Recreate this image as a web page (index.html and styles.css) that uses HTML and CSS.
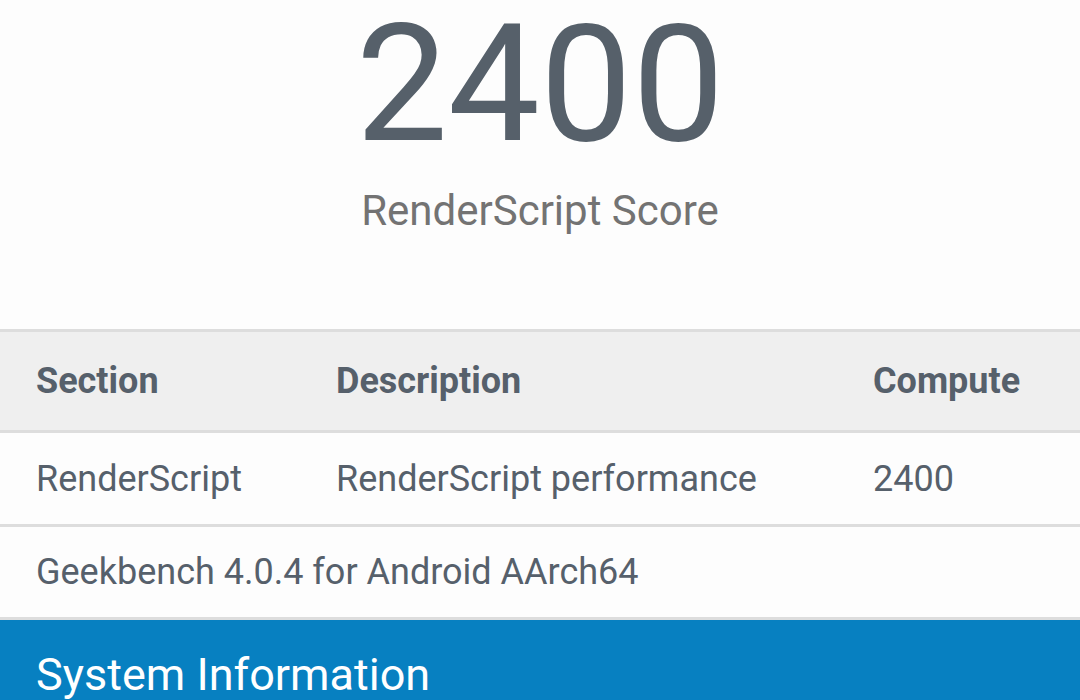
FILE: index.html
```html
<!DOCTYPE html>
<html lang="en">
<head>
  <meta charset="UTF-8" />
  <meta name="viewport" content="width=device-width, initial-scale=1.0" />
  <title>RenderScript Score</title>
  <link rel="stylesheet" href="styles.css">
</head>
<body>
  <section class="score">
    <div class="score-value">2400</div>
    <div class="score-label">RenderScript Score</div>
  </section>

  <div class="results">
    <div class="row head">
      <div>Section</div>
      <div>Description</div>
      <div>Compute</div>
    </div>
    <div class="row">
      <div>RenderScript</div>
      <div>RenderScript performance</div>
      <div>2400</div>
    </div>
    <div class="row note">
      <div>Geekbench 4.0.4 for Android AArch64</div>
    </div>
  </div>

  <div class="section-title">System Information</div>
</body>
</html>
```

FILE: styles.css
```css
:root {
  --text-color: #56606b;
  --line-color: #dddddd;
  --head-bg: #efefef;
  --blue: #0780c1;
}

body {
  margin: 0;
  font-family: Roboto, "Liberation Sans", sans-serif;
  background-color: #fdfdfd;
  color: var(--text-color);
}

.score {
  text-align: center;
  padding-top: 9px;
  padding-bottom: 93px;
}

.score-value {
  font-size: 164px;
  line-height: 150px;
  color: #56606a;
}

.score-label {
  margin-top: 27px;
  font-size: 42px;
  line-height: 50px;
  color: #737373;
}

.results {
  border-top: 3px solid var(--line-color);
}

.row {
  display: grid;
  grid-template-columns: 300px 537px 1fr;
  align-items: center;
  padding-left: 36px;
  height: 91px;
  font-size: 36px;
  border-bottom: 3px solid var(--line-color);
}

.row.head {
  height: 98px;
  background-color: var(--head-bg);
  font-weight: 700;
}

.row.note {
  height: 90px;
  grid-template-columns: 1fr;
}

.section-title {
  background-color: var(--blue);
  color: white;
  font-size: 45px;
  padding: 28px 36px 20px;
}
```
